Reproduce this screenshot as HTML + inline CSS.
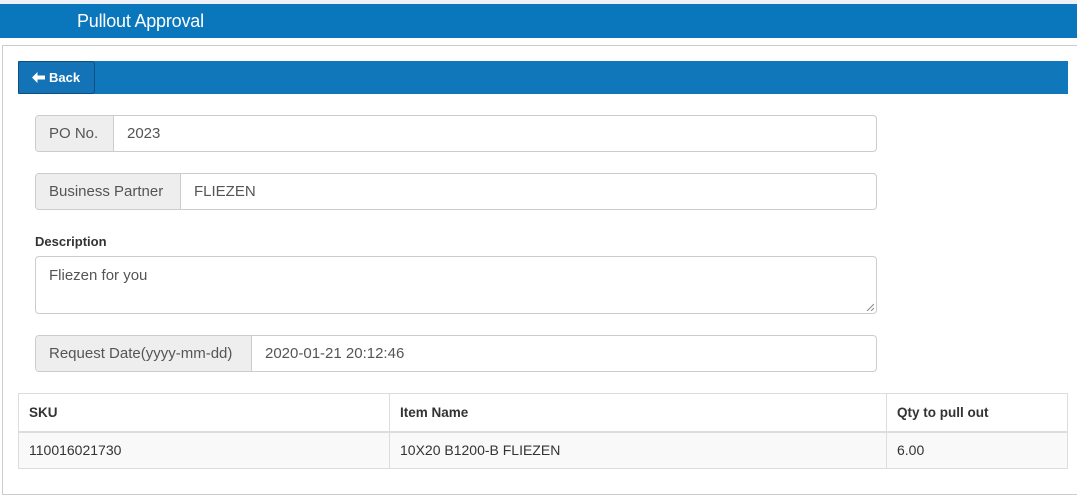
<!DOCTYPE html>
<html><head><style>
*{box-sizing:border-box}
body{margin:0;width:1077px;height:479px;overflow:hidden;background:#fff;font-family:"Liberation Sans",Arial,sans-serif;font-size:15px;color:#333;position:relative}
.top{position:absolute;left:0;top:0;width:1077px;height:4px;background:#eef2f8}
.hdr{position:absolute;left:0;top:4px;width:1077px;height:34px;background:#0a77bd;color:#fff;font-size:18px;line-height:34px;padding-left:77px;letter-spacing:-0.2px}
.panel{position:absolute;left:2px;top:45px;width:1090px;height:450px;border:1px solid #ccc}
.bar{position:absolute;left:18px;top:61px;width:1050px;height:33px;background:#1177bb}
.btn{position:absolute;left:18px;top:61px;width:77px;height:33px;background:#1373b6;border:1px solid #0d4f80;border-radius:3px;color:#fff;font-weight:bold;font-size:13px;line-height:31px;padding-left:13px;display:flex;align-items:center}
.ig{position:absolute;left:35px;width:842px;height:37px;border:1px solid #ccc;border-radius:4px;display:flex;overflow:hidden}
.ig .a{background:#eee;border-right:1px solid #ccc;padding:0 13px;line-height:35px;color:#555;white-space:nowrap}
.ig .v{padding-left:13px;line-height:35px;color:#555}
.lbl{position:absolute;left:35px;font-weight:bold;font-size:13px}
.ta{position:absolute;left:35px;top:256px;width:842px;height:58px;border:1px solid #ccc;border-radius:4px;padding:10px 13px;color:#555}
table{position:absolute;left:18px;top:393px;width:1050px;border-collapse:collapse;font-size:14px}
td,th{border:1px solid #ddd;padding:0 10px;text-align:left}
th{height:38px;border-bottom:2px solid #ddd;font-size:13.5px}
td{height:37px;background:#f9f9f9}
</style></head><body>
<div class="top"></div>
<div class="hdr">Pullout Approval</div>
<div class="panel"></div>
<div class="bar"></div>
<div class="btn"><svg width="13" height="11" viewBox="0 0 13 11" style="margin-right:4px"><path d="M0 5.5L5.5 0V3.5H13V7.5H5.5V11Z" fill="#fff"/></svg>Back</div>
<div class="ig" style="top:115px"><div class="a" style="width:78px">PO No.</div><div class="v">2023</div></div>
<div class="ig" style="top:173px"><div class="a" style="width:145px">Business Partner</div><div class="v">FLIEZEN</div></div>
<div class="lbl" style="top:234px">Description</div>
<div class="ta">Fliezen for you<svg width="8" height="8" style="position:absolute;right:2px;bottom:2px"><path d="M1 8L8 1M5 8L8 5" stroke="#888" stroke-width="1"/></svg></div>
<div class="ig" style="top:335px"><div class="a" style="width:216px">Request Date(yyyy-mm-dd)</div><div class="v">2020-01-21 20:12:46</div></div>
<table><tr><th style="width:371px">SKU</th><th style="width:497px">Item Name</th><th>Qty to pull out</th></tr>
<tr><td>110016021730</td><td>10X20 B1200-B FLIEZEN</td><td>6.00</td></tr></table>
</body></html>
